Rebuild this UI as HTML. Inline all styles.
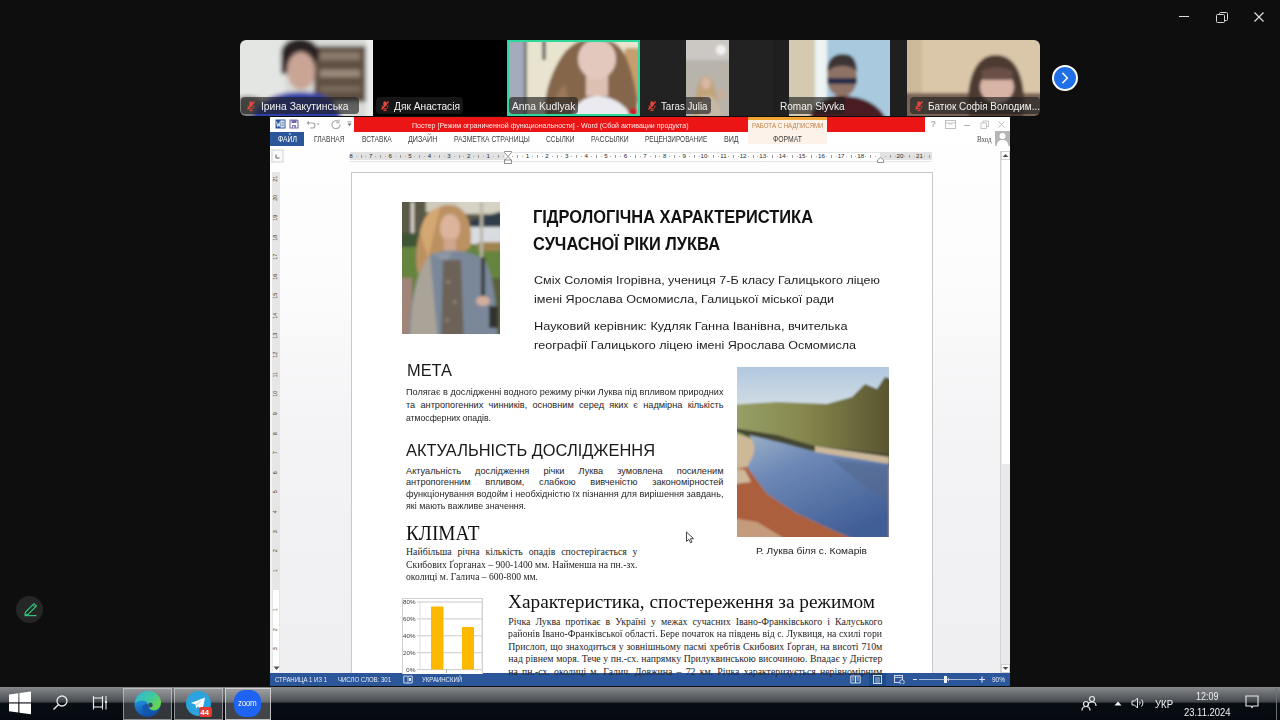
<!DOCTYPE html>
<html><head><meta charset="utf-8"><title>Zoom - Word poster</title>
<style>
html,body{margin:0;padding:0;}
body{width:1280px;height:720px;overflow:hidden;background:#0e0e0e;position:relative;font-family:"Liberation Sans",sans-serif;}
.a{position:absolute;}
.tl{position:absolute;white-space:nowrap;line-height:1;transform-origin:0 0;}
/* zoom controls */
.wc{position:absolute;}
/* video strip */
.strip{position:absolute;left:240px;top:40px;width:800px;height:76px;border-radius:6px;overflow:hidden;background:#000;}
.tile{position:absolute;top:0;height:76px;overflow:hidden;}
.lbl{position:absolute;top:57px;height:17px;border-radius:4px;background:rgba(34,34,34,0.66);}
.nxt{position:absolute;left:1052px;top:64.5px;width:22px;height:22px;border-radius:50%;background:#1f6fe8;border:2px solid #fff;}
/* word */
.word{position:absolute;left:270px;top:117px;width:740px;height:569px;background:#fff;overflow:hidden;}
.titlebar{position:absolute;left:84px;top:0;width:571px;height:15px;background:#ec1515;}
.ctx{position:absolute;left:478px;top:0;width:79px;height:27px;background:#fdf2e9;}
.ctx:before{content:"";position:absolute;left:0;top:0;width:79px;height:3px;background:#f3a531;}
.file{position:absolute;left:0;top:15px;width:34px;height:14px;background:#2b579a;}
.docbg{position:absolute;left:0;top:29px;width:730px;height:527px;background:linear-gradient(#fefefe 0px,#fcfcfd 130px,#f3f3f5 300px,#efeff1 527px);}
.page{position:absolute;left:81px;top:55px;width:580px;height:520px;background:#fff;border:1px solid #c8c8c8;border-bottom:none;}
.hrul{position:absolute;left:80px;top:35px;width:582px;height:8px;background:#fff;border-top:1px solid #e4e4e4;border-bottom:1px solid #e4e4e4;}
.hrulg{position:absolute;top:35px;height:8px;background:#e2e2e2;}
.vrul{position:absolute;left:2px;top:55px;width:8px;height:500px;background:#e6e6e6;}
.vrulw{position:absolute;left:2px;top:473px;width:8px;height:82px;background:#fff;border-left:1px solid #e6e6e6;border-right:1px solid #e6e6e6;box-sizing:border-box;}
.sb{position:absolute;left:730px;top:34px;width:10px;height:522px;background:#e9e9eb;border-left:1px solid #d4d4d4;box-sizing:border-box;}
.thumb{position:absolute;left:1px;top:9px;width:8px;height:304px;background:#fff;}
.status{position:absolute;left:0;top:556px;width:740px;height:13px;background:#2b579a;}
/* taskbar */
.task{position:absolute;left:0;top:687px;width:1280px;height:33px;background:linear-gradient(#86888a 0px,#6c6f72 6px,#494d52 14px,#2c3136 15.5px,#080d14 16px,#060a10 33px);}
.tbtn{position:absolute;top:688px;height:32px;box-sizing:border-box;border:1px solid rgba(220,220,220,0.55);background:rgba(255,255,255,0.18);}

</style></head><body>
<!-- zoom window controls -->
<div class="a" style="left:1179px;top:16px;width:10px;height:1.4px;background:#dcdcdc;"></div>
<div class="a" style="left:1218.5px;top:12px;width:7px;height:7px;border:1.2px solid #d8d8d8;border-radius:1.5px;"></div>
<div class="a" style="left:1216px;top:14px;width:7px;height:7px;border:1.2px solid #d8d8d8;border-radius:1.5px;background:#0e0e0e;"></div>
<svg class="a" style="left:1253px;top:11px" width="12" height="12" viewBox="0 0 12 12"><path d="M1.5 1.5L10.5 10.5M10.5 1.5L1.5 10.5" stroke="#dedede" stroke-width="1.2"/></svg>

<!-- video strip -->
<div class="strip">
<svg class="a" style="left:0px;top:0px;" width="134" height="76" viewBox="0 0 134 76"><defs><filter id="b0_0" x="-20%" y="-20%" width="140%" height="140%"><feGaussianBlur stdDeviation="2.0"/></filter></defs><g filter="url(#b0_0)"><rect x="-10" y="-10" width="160" height="100" fill="#d9dbd8"/><rect x="-10" y="-10" width="55" height="100" fill="#e4e6e3"/><ellipse cx="8" cy="70" rx="20" ry="14" fill="#7d7f7a"/><rect x="74" y="6" width="52" height="56" fill="#5f4f43"/><rect x="80" y="12" width="40" height="8" fill="#8a7a6c"/><rect x="80" y="30" width="40" height="7" fill="#9c8c7e"/><rect x="80" y="46" width="40" height="6" fill="#7a6a5c"/><rect x="126" y="-5" width="12" height="90" fill="#ececea"/><ellipse cx="60" cy="13" rx="19" ry="15" fill="#2a2323"/><rect x="41" y="12" width="8" height="22" fill="#2a2323"/><ellipse cx="61" cy="31" rx="14" ry="19" fill="#caa596"/><path d="M12 80C16 60 36 52 60 52C84 52 98 60 102 80Z" fill="#2a3ca8"/></g></svg>
<div class="lbl" style="left:1px;width:118px;"></div><svg class="a" style="left:5px;top:60px;" width="12" height="12" viewBox="0 0 12 12"><path d="M2.5 9.5L9.5 1.5" stroke="#e8453c" stroke-width="1.3"/><rect x="4.3" y="1.2" width="3.2" height="5.5" rx="1.6" fill="#e8453c"/><path d="M3 5.5C3 8 4.2 8.8 6 8.8C7.8 8.8 9 8 9 5.5M6 8.8V10.5M4.3 10.6H7.7" stroke="#e8453c" stroke-width="0.9" fill="none"/></svg>
<div class="tile" style="left:133.33px;width:133.34px;background:#000;"></div>
<div class="lbl" style="left:136px;width:87px;"></div><svg class="a" style="left:139px;top:60px;" width="12" height="12" viewBox="0 0 12 12"><path d="M2.5 9.5L9.5 1.5" stroke="#e8453c" stroke-width="1.3"/><rect x="4.3" y="1.2" width="3.2" height="5.5" rx="1.6" fill="#e8453c"/><path d="M3 5.5C3 8 4.2 8.8 6 8.8C7.8 8.8 9 8 9 5.5M6 8.8V10.5M4.3 10.6H7.7" stroke="#e8453c" stroke-width="0.9" fill="none"/></svg>
<svg class="a" style="left:266.67px;top:0px;" width="134" height="76" viewBox="0 0 134 76"><defs><filter id="b266_0" x="-20%" y="-20%" width="140%" height="140%"><feGaussianBlur stdDeviation="1.8"/></filter></defs><g filter="url(#b266_0)"><rect x="-10" y="-10" width="160" height="100" fill="#e9e4cf"/><rect x="-10" y="-10" width="28" height="100" fill="#a5aabc"/><rect x="17" y="-5" width="3" height="90" fill="#6e6e70"/><rect x="35" y="0" width="4" height="20" fill="#707070"/><rect x="118" y="8" width="20" height="55" fill="#c79f6e"/><path d="M40 80C34 60 44 30 58 12C66 3 76 -2 88 -2C104 -2 116 6 120 20C128 40 132 62 130 80Z" fill="#86664c"/><path d="M46 80C44 66 50 50 58 44L66 80Z" fill="#9a7858"/><rect x="79" y="34" width="22" height="22" fill="#dcc0b2"/><ellipse cx="90" cy="19" rx="19" ry="20" fill="#e3c9bd"/><path d="M64 80C66 64 78 56 90 56C104 56 120 64 126 80Z" fill="#ebeaf0"/><ellipse cx="126" cy="72" rx="5" ry="4" fill="#c0202a"/></g></svg>
<div class="tile" style="left:266.67px;width:133.33px;box-sizing:border-box;border:2px solid #2fd79a;background:transparent;"></div>
<div class="lbl" style="left:269px;width:69px;"></div>
<div class="tile" style="left:400px;width:133.33px;background:#222;"></div>
<svg class="a" style="left:445.5px;top:0px;" width="43" height="76" viewBox="0 0 43 76"><defs><filter id="b445_0" x="-20%" y="-20%" width="140%" height="140%"><feGaussianBlur stdDeviation="1.5"/></filter></defs><g filter="url(#b445_0)"><rect x="-10" y="-10" width="70" height="100" fill="#b8b3ab"/><rect x="-10" y="-10" width="70" height="30" fill="#cbc8c3"/><circle cx="35" cy="10" r="5" fill="#f2f2f2"/><path d="M8 80C8 56 12 36 20 36C28 36 32 56 34 80Z" fill="#c2a47a"/><ellipse cx="20" cy="43" rx="4.5" ry="6" fill="#d9b7a5"/><path d="M12 80C13 62 16 56 22 56C30 56 34 64 36 80Z" fill="#c5b8a4"/><ellipse cx="36" cy="54" rx="2.5" ry="5" fill="#d2aa98"/></g></svg>
<div class="lbl" style="left:403px;width:68px;"></div><svg class="a" style="left:406px;top:60px;" width="12" height="12" viewBox="0 0 12 12"><path d="M2.5 9.5L9.5 1.5" stroke="#e8453c" stroke-width="1.3"/><rect x="4.3" y="1.2" width="3.2" height="5.5" rx="1.6" fill="#e8453c"/><path d="M3 5.5C3 8 4.2 8.8 6 8.8C7.8 8.8 9 8 9 5.5M6 8.8V10.5M4.3 10.6H7.7" stroke="#e8453c" stroke-width="0.9" fill="none"/></svg>
<div class="tile" style="left:533.33px;width:133.34px;background:#1f1f1f;"></div>
<svg class="a" style="left:549px;top:0px;" width="101" height="76" viewBox="0 0 101 76"><defs><filter id="b549_0" x="-20%" y="-20%" width="140%" height="140%"><feGaussianBlur stdDeviation="1.5"/></filter></defs><g filter="url(#b549_0)"><rect x="-10" y="-10" width="130" height="100" fill="#a9cade"/><rect x="-10" y="-10" width="36" height="100" fill="#d3cab1"/><rect x="26" y="-10" width="12" height="100" fill="#eef3f3"/><ellipse cx="53" cy="38" rx="15" ry="19" fill="#8f7266"/><path d="M38 32C38 18 46 14 54 14C62 14 68 18 68 32C62 24 46 24 38 32Z" fill="#3c3636"/><rect x="38" y="38" width="30" height="6" rx="2" fill="#1e2a48"/><path d="M20 80C24 64 36 56 54 56C74 56 90 64 98 80Z" fill="#4a1c20"/></g></svg>
<div class="lbl" style="left:537.5px;width:67.5px;"></div>
<svg class="a" style="left:666.67px;top:0px;" width="134" height="76" viewBox="0 0 134 76"><defs><filter id="b666_0" x="-20%" y="-20%" width="140%" height="140%"><feGaussianBlur stdDeviation="1.8"/></filter></defs><g filter="url(#b666_0)"><rect x="-10" y="-10" width="160" height="100" fill="#dac6a8"/><rect x="-10" y="-10" width="25" height="100" fill="#cdb89a"/><rect x="-10" y="53" width="160" height="30" fill="#7c6454"/><path d="M62 80C58 50 64 15 89 15C114 15 120 50 116 80Z" fill="#4e3a32"/><ellipse cx="90" cy="47" rx="17" ry="16" fill="#d8b4a6"/><path d="M74 32C80 26 100 26 106 32L104 40L76 40Z" fill="#6a5046"/></g></svg>
<div class="lbl" style="left:670px;width:130px;"></div><svg class="a" style="left:673px;top:60px;" width="12" height="12" viewBox="0 0 12 12"><path d="M2.5 9.5L9.5 1.5" stroke="#e8453c" stroke-width="1.3"/><rect x="4.3" y="1.2" width="3.2" height="5.5" rx="1.6" fill="#e8453c"/><path d="M3 5.5C3 8 4.2 8.8 6 8.8C7.8 8.8 9 8 9 5.5M6 8.8V10.5M4.3 10.6H7.7" stroke="#e8453c" stroke-width="0.9" fill="none"/></svg>
</div>
<div class="nxt"><svg class="a" style="left:5px;top:4px" width="12" height="14" viewBox="0 0 12 14"><path d="M3.8 2.2L8.3 7L3.8 11.8" stroke="#fff" stroke-width="1.5" fill="none" stroke-linecap="round"/></svg></div>

<!-- annotate pencil -->
<div class="a" style="left:16px;top:596px;width:27px;height:27px;border-radius:50%;background:#262626;"></div>
<svg class="a" style="left:20px;top:599px" width="20" height="20" viewBox="0 0 20 20"><path d="M5 15.5L5.6 13L14 4.6L16.4 7L8 15.4Z" stroke="#2fc07c" stroke-width="1.2" fill="none" stroke-linejoin="round"/><path d="M12.6 6L15 8.4" stroke="#2fc07c" stroke-width="1"/><path d="M4.5 16.6H16.5" stroke="#2fc07c" stroke-width="1.2"/></svg>

<!-- word window -->
<div class="word">
  <div class="docbg"></div>
  <div class="titlebar"></div>
  <div class="ctx"></div>
  <div class="file"></div>
  <div class="hrul"></div>
  <div class="hrulg" style="left:80px;width:155px;"></div>
  <div class="hrulg" style="left:610px;width:52px;"></div>
  <div class="vrul"></div>
  <div class="vrulw"></div>
  <div class="page"></div>
  <div class="sb"><div class="thumb"></div></div>
  <div class="status"></div>
  <svg class="a" style="left:5px;top:2px;" width="11" height="10" viewBox="0 0 11 10"><rect x="0.5" y="0.5" width="10" height="9" fill="#2b579a"/><rect x="5.5" y="1.5" width="4" height="7" fill="#fff"/><rect x="6.3" y="2.8" width="2.5" height="0.8" fill="#2b579a"/><rect x="6.3" y="4.6" width="2.5" height="0.8" fill="#2b579a"/><rect x="6.3" y="6.4" width="2.5" height="0.8" fill="#2b579a"/><path d="M1.5 2.5L2.5 7.5L3.3 4.5L4.1 7.5L5 2.5" stroke="#fff" stroke-width="0.8" fill="none"/></svg>
<svg class="a" style="left:19px;top:2px;" width="10" height="10" viewBox="0 0 10 10"><path d="M1 1H8L9 2V9H1Z" fill="#fff" stroke="#7466a8" stroke-width="1.1"/><rect x="2.5" y="1" width="5" height="3" fill="#7466a8"/><rect x="3" y="6" width="4" height="3" fill="#8a80b8"/><rect x="4" y="7" width="1.2" height="1.5" fill="#fff"/></svg>
<svg class="a" style="left:36px;top:2px;" width="10" height="10" viewBox="0 0 10 10"><path d="M2 4H6.5C8.5 4 9 5.5 9 6.5C9 8 8 9 6.5 9H4" stroke="#a8a8a8" stroke-width="1.2" fill="none"/><path d="M0.5 4L3 1.5V6.5Z" fill="#a8a8a8"/></svg>
<svg class="a" style="left:46px;top:5px;" width="4" height="4" viewBox="0 0 4 4"><path d="M0.5 1.5H3.5L2 3Z" fill="#999"/></svg>
<svg class="a" style="left:61px;top:2px;" width="10" height="10" viewBox="0 0 10 10"><path d="M7.5 2.5A4 4 0 1 0 9 5.5" stroke="#aaa" stroke-width="1.2" fill="none"/><path d="M8 0.5V3.8H4.8" stroke="#aaa" stroke-width="1" fill="none"/></svg>
<svg class="a" style="left:77px;top:4px;" width="5" height="6" viewBox="0 0 5 6"><rect x="0.5" y="0.5" width="4" height="0.8" fill="#888"/><path d="M0.5 2.5H4.5L2.5 5Z" fill="#666"/></svg>
<div class="tl" style="left:660.5px;top:3px;font-family:'Liberation Sans',sans-serif;font-size:9px;font-weight:700;color:#b4b4b4;">?</div>
<svg class="a" style="left:675px;top:3px;" width="11" height="9" viewBox="0 0 11 9"><rect x="0.5" y="0.5" width="10" height="8" fill="none" stroke="#b8b8b8" stroke-width="0.9"/><path d="M0.5 3H10.5" stroke="#b8b8b8" stroke-width="0.9"/><path d="M3.5 5L5.5 3.5L7.5 5" stroke="#b8b8b8" stroke-width="0.8" fill="none"/></svg>
<div class="a" style="left:694px;top:8px;width:6px;height:1px;background:#b0b0b0;"></div>
<svg class="a" style="left:710px;top:3px;" width="9" height="9" viewBox="0 0 9 9"><rect x="1" y="3" width="5.5" height="5.5" fill="none" stroke="#b8b8b8" stroke-width="0.8"/><path d="M3 3V1H8.5V6.5H6.5" fill="none" stroke="#b8b8b8" stroke-width="0.8"/></svg>
<svg class="a" style="left:727px;top:3px;" width="9" height="9" viewBox="0 0 9 9"><path d="M1.5 1.5L7.5 7.5M7.5 1.5L1.5 7.5" stroke="#b4b4b4" stroke-width="0.9"/></svg>
<svg class="a" style="left:725px;top:14px;" width="15" height="15" viewBox="0 0 15 15"><rect x="0" y="0" width="15" height="15" fill="#b5b5b5"/><circle cx="7.5" cy="5" r="3" fill="#fff"/><path d="M1.5 15C2 10.5 4.5 9 7.5 9C10.5 9 13 10.5 13.5 15Z" fill="#fff"/></svg>
<div class="a" style="left:1px;top:32px;width:13px;height:14px;background:#e6e6e6;"></div>
<div class="a" style="left:3px;top:34px;width:9px;height:10px;background:#fafafa;"></div>
<svg class="a" style="left:5px;top:37px;" width="5" height="5" viewBox="0 0 5 5"><path d="M1 0.5V4H4.5" stroke="#666" stroke-width="1" fill="none"/></svg>
<svg class="a" style="left:234px;top:34px;" width="8" height="13" viewBox="0 0 8 13"><path d="M0.5 0.5H7.5V1.5L4 5.5L0.5 1.5Z" fill="#fff" stroke="#777" stroke-width="0.8"/><path d="M0.5 9.5L4 5.5L7.5 9.5Z" fill="#fff" stroke="#777" stroke-width="0.8"/><rect x="0.5" y="9" width="7" height="3.5" fill="#fff" stroke="#777" stroke-width="0.8"/></svg>
<svg class="a" style="left:607px;top:40px;" width="7" height="6" viewBox="0 0 7 6"><path d="M0.5 5.5H6.5V3L3.5 0.5L0.5 3Z" fill="#fff" stroke="#777" stroke-width="0.8"/></svg>
<div class="tl" style="left:81.1px;top:36px;width:10px;margin-left:-5px;text-align:center;font-family:'Liberation Sans',sans-serif;font-size:6.2px;color:#2a2a2a;">8</div>
<div class="a" style="left:85.6px;top:38.5px;width:0.8px;height:1px;background:#b0b0b0;"></div>
<div class="a" style="left:90.5px;top:37.5px;width:0.8px;height:3px;background:#9a9a9a;"></div>
<div class="a" style="left:95.4px;top:38.5px;width:0.8px;height:1px;background:#b0b0b0;"></div>
<div class="tl" style="left:100.7px;top:36px;width:10px;margin-left:-5px;text-align:center;font-family:'Liberation Sans',sans-serif;font-size:6.2px;color:#2a2a2a;">7</div>
<div class="a" style="left:105.2px;top:38.5px;width:0.8px;height:1px;background:#b0b0b0;"></div>
<div class="a" style="left:110.1px;top:37.5px;width:0.8px;height:3px;background:#9a9a9a;"></div>
<div class="a" style="left:115.0px;top:38.5px;width:0.8px;height:1px;background:#b0b0b0;"></div>
<div class="tl" style="left:120.3px;top:36px;width:10px;margin-left:-5px;text-align:center;font-family:'Liberation Sans',sans-serif;font-size:6.2px;color:#2a2a2a;">6</div>
<div class="a" style="left:124.8px;top:38.5px;width:0.8px;height:1px;background:#b0b0b0;"></div>
<div class="a" style="left:129.7px;top:37.5px;width:0.8px;height:3px;background:#9a9a9a;"></div>
<div class="a" style="left:134.6px;top:38.5px;width:0.8px;height:1px;background:#b0b0b0;"></div>
<div class="tl" style="left:139.9px;top:36px;width:10px;margin-left:-5px;text-align:center;font-family:'Liberation Sans',sans-serif;font-size:6.2px;color:#2a2a2a;">5</div>
<div class="a" style="left:144.4px;top:38.5px;width:0.8px;height:1px;background:#b0b0b0;"></div>
<div class="a" style="left:149.3px;top:37.5px;width:0.8px;height:3px;background:#9a9a9a;"></div>
<div class="a" style="left:154.2px;top:38.5px;width:0.8px;height:1px;background:#b0b0b0;"></div>
<div class="tl" style="left:159.5px;top:36px;width:10px;margin-left:-5px;text-align:center;font-family:'Liberation Sans',sans-serif;font-size:6.2px;color:#2a2a2a;">4</div>
<div class="a" style="left:164.0px;top:38.5px;width:0.8px;height:1px;background:#b0b0b0;"></div>
<div class="a" style="left:168.9px;top:37.5px;width:0.8px;height:3px;background:#9a9a9a;"></div>
<div class="a" style="left:173.8px;top:38.5px;width:0.8px;height:1px;background:#b0b0b0;"></div>
<div class="tl" style="left:179.1px;top:36px;width:10px;margin-left:-5px;text-align:center;font-family:'Liberation Sans',sans-serif;font-size:6.2px;color:#2a2a2a;">3</div>
<div class="a" style="left:183.6px;top:38.5px;width:0.8px;height:1px;background:#b0b0b0;"></div>
<div class="a" style="left:188.5px;top:37.5px;width:0.8px;height:3px;background:#9a9a9a;"></div>
<div class="a" style="left:193.4px;top:38.5px;width:0.8px;height:1px;background:#b0b0b0;"></div>
<div class="tl" style="left:198.7px;top:36px;width:10px;margin-left:-5px;text-align:center;font-family:'Liberation Sans',sans-serif;font-size:6.2px;color:#2a2a2a;">2</div>
<div class="a" style="left:203.2px;top:38.5px;width:0.8px;height:1px;background:#b0b0b0;"></div>
<div class="a" style="left:208.1px;top:37.5px;width:0.8px;height:3px;background:#9a9a9a;"></div>
<div class="a" style="left:213.0px;top:38.5px;width:0.8px;height:1px;background:#b0b0b0;"></div>
<div class="tl" style="left:218.3px;top:36px;width:10px;margin-left:-5px;text-align:center;font-family:'Liberation Sans',sans-serif;font-size:6.2px;color:#2a2a2a;">1</div>
<div class="a" style="left:222.8px;top:38.5px;width:0.8px;height:1px;background:#b0b0b0;"></div>
<div class="a" style="left:227.7px;top:37.5px;width:0.8px;height:3px;background:#9a9a9a;"></div>
<div class="a" style="left:232.6px;top:38.5px;width:0.8px;height:1px;background:#b0b0b0;"></div>
<div class="a" style="left:242.4px;top:38.5px;width:0.8px;height:1px;background:#b0b0b0;"></div>
<div class="a" style="left:247.3px;top:37.5px;width:0.8px;height:3px;background:#9a9a9a;"></div>
<div class="a" style="left:252.2px;top:38.5px;width:0.8px;height:1px;background:#b0b0b0;"></div>
<div class="tl" style="left:257.5px;top:36px;width:10px;margin-left:-5px;text-align:center;font-family:'Liberation Sans',sans-serif;font-size:6.2px;color:#2a2a2a;">1</div>
<div class="a" style="left:262.0px;top:38.5px;width:0.8px;height:1px;background:#b0b0b0;"></div>
<div class="a" style="left:266.9px;top:37.5px;width:0.8px;height:3px;background:#9a9a9a;"></div>
<div class="a" style="left:271.8px;top:38.5px;width:0.8px;height:1px;background:#b0b0b0;"></div>
<div class="tl" style="left:277.1px;top:36px;width:10px;margin-left:-5px;text-align:center;font-family:'Liberation Sans',sans-serif;font-size:6.2px;color:#2a2a2a;">2</div>
<div class="a" style="left:281.6px;top:38.5px;width:0.8px;height:1px;background:#b0b0b0;"></div>
<div class="a" style="left:286.5px;top:37.5px;width:0.8px;height:3px;background:#9a9a9a;"></div>
<div class="a" style="left:291.4px;top:38.5px;width:0.8px;height:1px;background:#b0b0b0;"></div>
<div class="tl" style="left:296.7px;top:36px;width:10px;margin-left:-5px;text-align:center;font-family:'Liberation Sans',sans-serif;font-size:6.2px;color:#2a2a2a;">3</div>
<div class="a" style="left:301.2px;top:38.5px;width:0.8px;height:1px;background:#b0b0b0;"></div>
<div class="a" style="left:306.1px;top:37.5px;width:0.8px;height:3px;background:#9a9a9a;"></div>
<div class="a" style="left:311.0px;top:38.5px;width:0.8px;height:1px;background:#b0b0b0;"></div>
<div class="tl" style="left:316.3px;top:36px;width:10px;margin-left:-5px;text-align:center;font-family:'Liberation Sans',sans-serif;font-size:6.2px;color:#2a2a2a;">4</div>
<div class="a" style="left:320.8px;top:38.5px;width:0.8px;height:1px;background:#b0b0b0;"></div>
<div class="a" style="left:325.7px;top:37.5px;width:0.8px;height:3px;background:#9a9a9a;"></div>
<div class="a" style="left:330.6px;top:38.5px;width:0.8px;height:1px;background:#b0b0b0;"></div>
<div class="tl" style="left:335.9px;top:36px;width:10px;margin-left:-5px;text-align:center;font-family:'Liberation Sans',sans-serif;font-size:6.2px;color:#2a2a2a;">5</div>
<div class="a" style="left:340.4px;top:38.5px;width:0.8px;height:1px;background:#b0b0b0;"></div>
<div class="a" style="left:345.3px;top:37.5px;width:0.8px;height:3px;background:#9a9a9a;"></div>
<div class="a" style="left:350.2px;top:38.5px;width:0.8px;height:1px;background:#b0b0b0;"></div>
<div class="tl" style="left:355.5px;top:36px;width:10px;margin-left:-5px;text-align:center;font-family:'Liberation Sans',sans-serif;font-size:6.2px;color:#2a2a2a;">6</div>
<div class="a" style="left:360.0px;top:38.5px;width:0.8px;height:1px;background:#b0b0b0;"></div>
<div class="a" style="left:364.9px;top:37.5px;width:0.8px;height:3px;background:#9a9a9a;"></div>
<div class="a" style="left:369.8px;top:38.5px;width:0.8px;height:1px;background:#b0b0b0;"></div>
<div class="tl" style="left:375.1px;top:36px;width:10px;margin-left:-5px;text-align:center;font-family:'Liberation Sans',sans-serif;font-size:6.2px;color:#2a2a2a;">7</div>
<div class="a" style="left:379.6px;top:38.5px;width:0.8px;height:1px;background:#b0b0b0;"></div>
<div class="a" style="left:384.5px;top:37.5px;width:0.8px;height:3px;background:#9a9a9a;"></div>
<div class="a" style="left:389.4px;top:38.5px;width:0.8px;height:1px;background:#b0b0b0;"></div>
<div class="tl" style="left:394.7px;top:36px;width:10px;margin-left:-5px;text-align:center;font-family:'Liberation Sans',sans-serif;font-size:6.2px;color:#2a2a2a;">8</div>
<div class="a" style="left:399.2px;top:38.5px;width:0.8px;height:1px;background:#b0b0b0;"></div>
<div class="a" style="left:404.1px;top:37.5px;width:0.8px;height:3px;background:#9a9a9a;"></div>
<div class="a" style="left:409.0px;top:38.5px;width:0.8px;height:1px;background:#b0b0b0;"></div>
<div class="tl" style="left:414.3px;top:36px;width:10px;margin-left:-5px;text-align:center;font-family:'Liberation Sans',sans-serif;font-size:6.2px;color:#2a2a2a;">9</div>
<div class="a" style="left:418.8px;top:38.5px;width:0.8px;height:1px;background:#b0b0b0;"></div>
<div class="a" style="left:423.7px;top:37.5px;width:0.8px;height:3px;background:#9a9a9a;"></div>
<div class="a" style="left:428.6px;top:38.5px;width:0.8px;height:1px;background:#b0b0b0;"></div>
<div class="tl" style="left:433.9px;top:36px;width:10px;margin-left:-5px;text-align:center;font-family:'Liberation Sans',sans-serif;font-size:6.2px;color:#2a2a2a;">10</div>
<div class="a" style="left:438.4px;top:38.5px;width:0.8px;height:1px;background:#b0b0b0;"></div>
<div class="a" style="left:443.3px;top:37.5px;width:0.8px;height:3px;background:#9a9a9a;"></div>
<div class="a" style="left:448.2px;top:38.5px;width:0.8px;height:1px;background:#b0b0b0;"></div>
<div class="tl" style="left:453.5px;top:36px;width:10px;margin-left:-5px;text-align:center;font-family:'Liberation Sans',sans-serif;font-size:6.2px;color:#2a2a2a;">11</div>
<div class="a" style="left:458.0px;top:38.5px;width:0.8px;height:1px;background:#b0b0b0;"></div>
<div class="a" style="left:462.9px;top:37.5px;width:0.8px;height:3px;background:#9a9a9a;"></div>
<div class="a" style="left:467.8px;top:38.5px;width:0.8px;height:1px;background:#b0b0b0;"></div>
<div class="tl" style="left:473.1px;top:36px;width:10px;margin-left:-5px;text-align:center;font-family:'Liberation Sans',sans-serif;font-size:6.2px;color:#2a2a2a;">12</div>
<div class="a" style="left:477.6px;top:38.5px;width:0.8px;height:1px;background:#b0b0b0;"></div>
<div class="a" style="left:482.5px;top:37.5px;width:0.8px;height:3px;background:#9a9a9a;"></div>
<div class="a" style="left:487.4px;top:38.5px;width:0.8px;height:1px;background:#b0b0b0;"></div>
<div class="tl" style="left:492.7px;top:36px;width:10px;margin-left:-5px;text-align:center;font-family:'Liberation Sans',sans-serif;font-size:6.2px;color:#2a2a2a;">13</div>
<div class="a" style="left:497.2px;top:38.5px;width:0.8px;height:1px;background:#b0b0b0;"></div>
<div class="a" style="left:502.1px;top:37.5px;width:0.8px;height:3px;background:#9a9a9a;"></div>
<div class="a" style="left:507.0px;top:38.5px;width:0.8px;height:1px;background:#b0b0b0;"></div>
<div class="tl" style="left:512.3px;top:36px;width:10px;margin-left:-5px;text-align:center;font-family:'Liberation Sans',sans-serif;font-size:6.2px;color:#2a2a2a;">14</div>
<div class="a" style="left:516.8px;top:38.5px;width:0.8px;height:1px;background:#b0b0b0;"></div>
<div class="a" style="left:521.7px;top:37.5px;width:0.8px;height:3px;background:#9a9a9a;"></div>
<div class="a" style="left:526.6px;top:38.5px;width:0.8px;height:1px;background:#b0b0b0;"></div>
<div class="tl" style="left:531.9px;top:36px;width:10px;margin-left:-5px;text-align:center;font-family:'Liberation Sans',sans-serif;font-size:6.2px;color:#2a2a2a;">15</div>
<div class="a" style="left:536.4px;top:38.5px;width:0.8px;height:1px;background:#b0b0b0;"></div>
<div class="a" style="left:541.3px;top:37.5px;width:0.8px;height:3px;background:#9a9a9a;"></div>
<div class="a" style="left:546.2px;top:38.5px;width:0.8px;height:1px;background:#b0b0b0;"></div>
<div class="tl" style="left:551.5px;top:36px;width:10px;margin-left:-5px;text-align:center;font-family:'Liberation Sans',sans-serif;font-size:6.2px;color:#2a2a2a;">16</div>
<div class="a" style="left:556.0px;top:38.5px;width:0.8px;height:1px;background:#b0b0b0;"></div>
<div class="a" style="left:560.9px;top:37.5px;width:0.8px;height:3px;background:#9a9a9a;"></div>
<div class="a" style="left:565.8px;top:38.5px;width:0.8px;height:1px;background:#b0b0b0;"></div>
<div class="tl" style="left:571.1px;top:36px;width:10px;margin-left:-5px;text-align:center;font-family:'Liberation Sans',sans-serif;font-size:6.2px;color:#2a2a2a;">17</div>
<div class="a" style="left:575.6px;top:38.5px;width:0.8px;height:1px;background:#b0b0b0;"></div>
<div class="a" style="left:580.5px;top:37.5px;width:0.8px;height:3px;background:#9a9a9a;"></div>
<div class="a" style="left:585.4px;top:38.5px;width:0.8px;height:1px;background:#b0b0b0;"></div>
<div class="tl" style="left:590.7px;top:36px;width:10px;margin-left:-5px;text-align:center;font-family:'Liberation Sans',sans-serif;font-size:6.2px;color:#2a2a2a;">18</div>
<div class="a" style="left:595.2px;top:38.5px;width:0.8px;height:1px;background:#b0b0b0;"></div>
<div class="a" style="left:600.1px;top:37.5px;width:0.8px;height:3px;background:#9a9a9a;"></div>
<div class="a" style="left:605.0px;top:38.5px;width:0.8px;height:1px;background:#b0b0b0;"></div>
<div class="a" style="left:614.8px;top:38.5px;width:0.8px;height:1px;background:#b0b0b0;"></div>
<div class="a" style="left:619.7px;top:37.5px;width:0.8px;height:3px;background:#9a9a9a;"></div>
<div class="a" style="left:624.6px;top:38.5px;width:0.8px;height:1px;background:#b0b0b0;"></div>
<div class="tl" style="left:629.9px;top:36px;width:10px;margin-left:-5px;text-align:center;font-family:'Liberation Sans',sans-serif;font-size:6.2px;color:#2a2a2a;">20</div>
<div class="a" style="left:634.4px;top:38.5px;width:0.8px;height:1px;background:#b0b0b0;"></div>
<div class="a" style="left:639.3px;top:37.5px;width:0.8px;height:3px;background:#9a9a9a;"></div>
<div class="a" style="left:644.2px;top:38.5px;width:0.8px;height:1px;background:#b0b0b0;"></div>
<div class="tl" style="left:649.5px;top:36px;width:10px;margin-left:-5px;text-align:center;font-family:'Liberation Sans',sans-serif;font-size:6.2px;color:#2a2a2a;">21</div>
<div class="a" style="left:654.0px;top:38.5px;width:0.8px;height:1px;background:#b0b0b0;"></div>
<div class="a" style="left:658.9px;top:37.5px;width:0.8px;height:3px;background:#9a9a9a;"></div>
<div class="tl" style="left:6px;top:453.7px;width:10px;margin-left:-5px;margin-top:-3px;text-align:center;font-family:'Liberation Sans',sans-serif;font-size:5.5px;color:#3a3a3a;transform:rotate(-90deg);transform-origin:50% 50%;">1</div>
<div class="tl" style="left:6px;top:434.1px;width:10px;margin-left:-5px;margin-top:-3px;text-align:center;font-family:'Liberation Sans',sans-serif;font-size:5.5px;color:#3a3a3a;transform:rotate(-90deg);transform-origin:50% 50%;">2</div>
<div class="tl" style="left:6px;top:414.5px;width:10px;margin-left:-5px;margin-top:-3px;text-align:center;font-family:'Liberation Sans',sans-serif;font-size:5.5px;color:#3a3a3a;transform:rotate(-90deg);transform-origin:50% 50%;">3</div>
<div class="tl" style="left:6px;top:394.9px;width:10px;margin-left:-5px;margin-top:-3px;text-align:center;font-family:'Liberation Sans',sans-serif;font-size:5.5px;color:#3a3a3a;transform:rotate(-90deg);transform-origin:50% 50%;">4</div>
<div class="tl" style="left:6px;top:375.3px;width:10px;margin-left:-5px;margin-top:-3px;text-align:center;font-family:'Liberation Sans',sans-serif;font-size:5.5px;color:#3a3a3a;transform:rotate(-90deg);transform-origin:50% 50%;">5</div>
<div class="tl" style="left:6px;top:355.7px;width:10px;margin-left:-5px;margin-top:-3px;text-align:center;font-family:'Liberation Sans',sans-serif;font-size:5.5px;color:#3a3a3a;transform:rotate(-90deg);transform-origin:50% 50%;">6</div>
<div class="tl" style="left:6px;top:336.1px;width:10px;margin-left:-5px;margin-top:-3px;text-align:center;font-family:'Liberation Sans',sans-serif;font-size:5.5px;color:#3a3a3a;transform:rotate(-90deg);transform-origin:50% 50%;">7</div>
<div class="tl" style="left:6px;top:316.5px;width:10px;margin-left:-5px;margin-top:-3px;text-align:center;font-family:'Liberation Sans',sans-serif;font-size:5.5px;color:#3a3a3a;transform:rotate(-90deg);transform-origin:50% 50%;">8</div>
<div class="tl" style="left:6px;top:296.9px;width:10px;margin-left:-5px;margin-top:-3px;text-align:center;font-family:'Liberation Sans',sans-serif;font-size:5.5px;color:#3a3a3a;transform:rotate(-90deg);transform-origin:50% 50%;">9</div>
<div class="tl" style="left:6px;top:277.3px;width:10px;margin-left:-5px;margin-top:-3px;text-align:center;font-family:'Liberation Sans',sans-serif;font-size:5.5px;color:#3a3a3a;transform:rotate(-90deg);transform-origin:50% 50%;">10</div>
<div class="tl" style="left:6px;top:257.7px;width:10px;margin-left:-5px;margin-top:-3px;text-align:center;font-family:'Liberation Sans',sans-serif;font-size:5.5px;color:#3a3a3a;transform:rotate(-90deg);transform-origin:50% 50%;">11</div>
<div class="tl" style="left:6px;top:238.1px;width:10px;margin-left:-5px;margin-top:-3px;text-align:center;font-family:'Liberation Sans',sans-serif;font-size:5.5px;color:#3a3a3a;transform:rotate(-90deg);transform-origin:50% 50%;">12</div>
<div class="tl" style="left:6px;top:218.5px;width:10px;margin-left:-5px;margin-top:-3px;text-align:center;font-family:'Liberation Sans',sans-serif;font-size:5.5px;color:#3a3a3a;transform:rotate(-90deg);transform-origin:50% 50%;">13</div>
<div class="tl" style="left:6px;top:198.9px;width:10px;margin-left:-5px;margin-top:-3px;text-align:center;font-family:'Liberation Sans',sans-serif;font-size:5.5px;color:#3a3a3a;transform:rotate(-90deg);transform-origin:50% 50%;">14</div>
<div class="tl" style="left:6px;top:179.3px;width:10px;margin-left:-5px;margin-top:-3px;text-align:center;font-family:'Liberation Sans',sans-serif;font-size:5.5px;color:#3a3a3a;transform:rotate(-90deg);transform-origin:50% 50%;">15</div>
<div class="tl" style="left:6px;top:159.7px;width:10px;margin-left:-5px;margin-top:-3px;text-align:center;font-family:'Liberation Sans',sans-serif;font-size:5.5px;color:#3a3a3a;transform:rotate(-90deg);transform-origin:50% 50%;">16</div>
<div class="tl" style="left:6px;top:140.1px;width:10px;margin-left:-5px;margin-top:-3px;text-align:center;font-family:'Liberation Sans',sans-serif;font-size:5.5px;color:#3a3a3a;transform:rotate(-90deg);transform-origin:50% 50%;">17</div>
<div class="tl" style="left:6px;top:120.5px;width:10px;margin-left:-5px;margin-top:-3px;text-align:center;font-family:'Liberation Sans',sans-serif;font-size:5.5px;color:#3a3a3a;transform:rotate(-90deg);transform-origin:50% 50%;">18</div>
<div class="tl" style="left:6px;top:100.9px;width:10px;margin-left:-5px;margin-top:-3px;text-align:center;font-family:'Liberation Sans',sans-serif;font-size:5.5px;color:#3a3a3a;transform:rotate(-90deg);transform-origin:50% 50%;">19</div>
<div class="tl" style="left:6px;top:81.3px;width:10px;margin-left:-5px;margin-top:-3px;text-align:center;font-family:'Liberation Sans',sans-serif;font-size:5.5px;color:#3a3a3a;transform:rotate(-90deg);transform-origin:50% 50%;">20</div>
<div class="tl" style="left:6px;top:61.7px;width:10px;margin-left:-5px;margin-top:-3px;text-align:center;font-family:'Liberation Sans',sans-serif;font-size:5.5px;color:#3a3a3a;transform:rotate(-90deg);transform-origin:50% 50%;">21</div>
<div class="tl" style="left:6px;top:492.9px;width:10px;margin-left:-5px;margin-top:-3px;text-align:center;font-family:'Liberation Sans',sans-serif;font-size:5.5px;color:#3a3a3a;transform:rotate(-90deg);transform-origin:50% 50%;">1</div>
<div class="tl" style="left:6px;top:512.5px;width:10px;margin-left:-5px;margin-top:-3px;text-align:center;font-family:'Liberation Sans',sans-serif;font-size:5.5px;color:#3a3a3a;transform:rotate(-90deg);transform-origin:50% 50%;">2</div>
<div class="tl" style="left:6px;top:532.1px;width:10px;margin-left:-5px;margin-top:-3px;text-align:center;font-family:'Liberation Sans',sans-serif;font-size:5.5px;color:#3a3a3a;transform:rotate(-90deg);transform-origin:50% 50%;">3</div>
<svg class="a" style="left:3px;top:549px;" width="7" height="5" viewBox="0 0 7 5"><path d="M0.5 0.5H6.5L3.5 4Z" fill="#555"/></svg>
<div class="a" style="left:731px;top:34px;width:9px;height:9px;background:#fff;border:1px solid #d0d0d0;box-sizing:border-box;"></div>
<svg class="a" style="left:732px;top:36px;" width="7" height="5" viewBox="0 0 7 5"><path d="M0.5 4H6.5L3.5 1Z" fill="#555"/></svg>
<div class="a" style="left:731px;top:547px;width:9px;height:9px;background:#fff;border:1px solid #d0d0d0;box-sizing:border-box;"></div>
<svg class="a" style="left:732px;top:549px;" width="7" height="5" viewBox="0 0 7 5"><path d="M0.5 1H6.5L3.5 4Z" fill="#555"/></svg>
<svg class="a" style="left:133px;top:558px;" width="10" height="9" viewBox="0 0 10 9"><path d="M0.8 1V8H4.5L5 8.6L5.5 8H9.2V1H5.5L5 1.6L4.5 1Z" fill="none" stroke="#dfe6f2" stroke-width="0.9"/><path d="M5 1.5V8" stroke="#dfe6f2" stroke-width="0.8"/><rect x="6" y="3" width="2" height="3" fill="#dfe6f2"/></svg>
<svg class="a" style="left:580px;top:558px;" width="11" height="9" viewBox="0 0 11 9"><path d="M0.8 1V8H5.5V1ZM5.5 1V8H10.2V1Z" fill="none" stroke="#dfe6f2" stroke-width="0.9"/><path d="M2 3H4.3M2 5H4.3M6.7 3H9M6.7 5H9" stroke="#dfe6f2" stroke-width="0.7"/></svg>
<div class="a" style="left:599px;top:556px;width:17px;height:13px;background:#1e4a86;"></div>
<svg class="a" style="left:603px;top:558px;" width="9" height="9" viewBox="0 0 9 9"><rect x="0.5" y="0.5" width="8" height="8" fill="none" stroke="#dfe6f2" stroke-width="0.9"/><path d="M2 3H7M2 5H7M2 7H7" stroke="#dfe6f2" stroke-width="0.8"/></svg>
<svg class="a" style="left:624px;top:558px;" width="11" height="9" viewBox="0 0 11 9"><rect x="0.5" y="0.5" width="8" height="7" fill="none" stroke="#dfe6f2" stroke-width="0.9"/><path d="M0.5 2.5H8.5" stroke="#dfe6f2" stroke-width="0.8"/><circle cx="8" cy="7" r="2.3" fill="#2b579a" stroke="#dfe6f2" stroke-width="0.8"/></svg>
<div class="a" style="left:643px;top:562px;width:4px;height:1px;background:#dfe6f2;"></div>
<div class="a" style="left:649px;top:562px;width:58px;height:1px;background:#a9bbd8;"></div>
<div class="a" style="left:674px;top:559px;width:3px;height:7px;background:#f2f5fa;"></div>
<div class="a" style="left:678px;top:561px;width:1px;height:3px;background:#c9d5e8;"></div>
<svg class="a" style="left:709px;top:559px;" width="6" height="7" viewBox="0 0 6 7"><path d="M3 0.5V6.5M0 3.5H6" stroke="#dfe6f2" stroke-width="1.1"/></svg>
</div>
<svg class="a" style="left:402px;top:202px;" width="98" height="132" viewBox="0 0 98 132"><defs><filter id="b402_202" x="-20%" y="-20%" width="140%" height="140%"><feGaussianBlur stdDeviation="1.5"/></filter></defs><g filter="url(#b402_202)"><rect x="-10" y="-10" width="120" height="160" fill="#667e44"/><rect x="-10" y="-10" width="120" height="42" fill="#5a5846"/><rect x="24" y="-10" width="40" height="20" fill="#cfcabb"/><rect x="56" y="-10" width="52" height="22" fill="#d6d2c4"/><rect x="9" y="0" width="3" height="36" fill="#dad6cc"/><path d="M64 20L100 9V26H64Z" fill="#2f3c48"/><rect x="68" y="25" width="32" height="17" fill="#d9dde0"/><rect x="-10" y="31" width="40" height="14" fill="#3d5530"/><rect x="-10" y="45" width="120" height="35" fill="#65843e"/><rect x="76" y="40" width="25" height="9" fill="#a08450"/><rect x="78" y="0" width="3" height="100" fill="#b8b4a6"/><rect x="-10" y="76" width="20" height="60" fill="#a08478"/><rect x="86" y="76" width="20" height="60" fill="#58603a"/><path d="M16 72C10 45 20 3 47 3C66 3 72 26 68 46L58 52L30 60Z" fill="#bc9162"/><path d="M18 30C22 12 30 6 38 6L26 56Z" fill="#d4a872"/><ellipse cx="48" cy="26" rx="10" ry="14" fill="#dbb49c"/><rect x="42" y="36" width="12" height="14" fill="#cfa68e"/><path d="M6 140C8 104 14 64 30 52C45 46 70 47 84 60C92 76 96 110 95 140Z" fill="#7a889a"/><path d="M8 140C9 104 14 66 28 54L36 140Z" fill="#aaa498"/><path d="M30 52L50 50L44 60Z" fill="#8d98a6"/><path d="M39 140L41 58L59 58L62 140Z" fill="#6c6258"/><circle cx="46" cy="80" r="2" fill="#8c8276"/><circle cx="53" cy="100" r="2" fill="#8c8276"/><circle cx="45" cy="118" r="2" fill="#8c8276"/><rect x="79" y="55" width="4" height="45" fill="#3a3c40"/><ellipse cx="81" cy="99" rx="7" ry="5" fill="#d2ae9c"/><rect x="87" y="104" width="9" height="22" fill="#33332f"/></g></svg>
<svg class="a" style="left:737px;top:367px;" width="152" height="170" viewBox="0 0 152 170"><defs><filter id="b737_367" x="-20%" y="-20%" width="140%" height="140%"><feGaussianBlur stdDeviation="1.2"/></filter></defs><g filter="url(#b737_367)"><defs><linearGradient id="sky" x1="0" y1="0" x2="0" y2="1"><stop offset="0" stop-color="#a9c3df"/><stop offset="1" stop-color="#d4dee4"/></linearGradient><linearGradient id="riv" x1="0" y1="0" x2="0.6" y2="1"><stop offset="0" stop-color="#9cb0c8"/><stop offset="0.35" stop-color="#6d88b6"/><stop offset="1" stop-color="#415e96"/></linearGradient><linearGradient id="veg" x1="0" y1="0" x2="1" y2="0"><stop offset="0" stop-color="#98a26a"/><stop offset="0.45" stop-color="#86884e"/><stop offset="1" stop-color="#55502e"/></linearGradient></defs><rect x="-10" y="-10" width="180" height="200" fill="#c6ae8e"/><rect x="-10" y="-10" width="180" height="52" fill="url(#sky)"/><path d="M-10 38L40 35L90 37L115 30L128 17L140 22L148 10L160 14V100H-10Z" fill="url(#veg)"/><path d="M-10 60L40 68L78 79L160 88V96L78 84L25 76Z" fill="#444632"/><path d="M78 79L152 90V98L78 85.5Z" fill="#cbb89c"/><path d="M-10 64L25 75L22 90L8 103L-10 103Z" fill="#cdb898"/><path d="M12 68C30 72 55 78 78 85L152 97V175H124L95 163L59 146L30 127L10 100C16 90 22 80 12 68Z" fill="url(#riv)"/><path d="M95 92L152 100V135C130 122 110 106 95 92Z" fill="#54688a" opacity="0.55"/><path d="M-10 103L10 100L30 127L59 146L95 163L124 175H-10Z" fill="#ab5f3d"/><path d="M-10 150L20 155L45 170L50 175H-10Z" fill="#cfb797" opacity="0.7"/><path d="M-10 100L8 103L14 115L-10 118Z" fill="#cdb898"/></g></svg>
<svg class="a" style="left:402px;top:598px;" width="82" height="76" viewBox="0 0 82 76"><rect x="0.5" y="0.5" width="80" height="90" fill="#fff" stroke="#cfcfcf" stroke-width="1"/><path d="M15 4.0H80" stroke="#bdbdbd" stroke-width="0.8"/><path d="M15 20.9H80" stroke="#bdbdbd" stroke-width="0.8"/><path d="M15 37.8H80" stroke="#bdbdbd" stroke-width="0.8"/><path d="M15 54.7H80" stroke="#bdbdbd" stroke-width="0.8"/><path d="M15 71.6H80" stroke="#bdbdbd" stroke-width="0.8"/><path d="M18 3V72M80 3V72" stroke="#d4d4d4" stroke-width="0.8"/><rect x="29" y="8.5" width="12.5" height="63" fill="#fdb900"/><rect x="60" y="29" width="12" height="42.5" fill="#fdb900"/><path d="M44.5 71.5V75" stroke="#999" stroke-width="0.8"/></svg>
<svg class="a" style="left:685px;top:531px;" width="10" height="13" viewBox="0 0 10 13"><path d="M1.5 1V10.5L3.8 8.3L5.5 11.8L7 11.1L5.4 7.7H8.6Z" fill="#fff" stroke="#333" stroke-width="0.9" stroke-linejoin="round"/></svg>

<!-- taskbar -->
<div class="task"></div>
<div class="tbtn" style="left:123px;width:49px;"></div>
<div class="tbtn" style="left:174px;width:49px;"></div>
<div class="tbtn" style="left:225px;width:46px;border-color:rgba(230,230,230,0.75);background:rgba(255,255,255,0.24);"></div>
<svg class="a" style="left:8px;top:691px;" width="24" height="24" viewBox="0 0 24 24"><path d="M1 3.6L10.3 2.3V11.3H1Z" fill="#fff"/><path d="M11.4 2.1L23 0.5V11.3H11.4Z" fill="#fff"/><path d="M1 12.4H10.3V21.5L1 20.3Z" fill="#fff"/><path d="M11.4 12.4H23V23.3L11.4 21.7Z" fill="#fff"/></svg>
<svg class="a" style="left:51px;top:694px;" width="18" height="18" viewBox="0 0 18 18"><circle cx="11" cy="7" r="5" fill="none" stroke="#e8e8e8" stroke-width="1.3"/><path d="M7.3 10.7L2.5 15.5" stroke="#e8e8e8" stroke-width="1.4"/></svg>
<svg class="a" style="left:92px;top:695px;" width="16" height="16" viewBox="0 0 16 16"><rect x="1.5" y="3" width="9" height="9" fill="none" stroke="#e8e8e8" stroke-width="1.1"/><path d="M1.5 1V14.5M10.5 1V14.5M14 1V14.5" stroke="#e8e8e8" stroke-width="1.1"/><rect x="13" y="6" width="2" height="2" fill="#e8e8e8"/></svg>
<svg class="a" style="left:133.5px;top:690px;" width="28" height="28" viewBox="0 0 28 28"><defs><linearGradient id="eg1" x1="0" y1="0" x2="0.3" y2="1"><stop offset="0" stop-color="#36b0ea"/><stop offset="0.5" stop-color="#1d84d6"/><stop offset="1" stop-color="#0f4fa6"/></linearGradient><linearGradient id="eg2" x1="0" y1="0" x2="1" y2="0.6"><stop offset="0" stop-color="#2fb8d8"/><stop offset="0.6" stop-color="#3fc8a0"/><stop offset="1" stop-color="#6ad64c"/></linearGradient></defs><circle cx="13.5" cy="14" r="13" fill="url(#eg1)"/><path d="M1.2 12C2.5 5 8 1 14.5 1C21.5 1 27 6.5 27 12.5C27 17 23.5 20.5 19.5 20.5C16.5 20.5 14.5 18.5 14.5 16C14.5 13 12 10.5 8 10.5C5 10.5 2.5 11.5 1.2 13.5Z" fill="url(#eg2)"/><path d="M14.5 16C14.5 18.5 16.5 20.5 19.5 20.5C18 22.5 14 24 10.5 22.5C8 21 7.5 18 9 16C10.5 14 14.5 13.5 14.5 16Z" fill="#1458ae"/><ellipse cx="16.5" cy="15" rx="2.2" ry="2.6" fill="#3b4a58"/></svg>
<svg class="a" style="left:185px;top:690px;" width="27" height="27" viewBox="0 0 27 27"><circle cx="13.5" cy="13.5" r="12.5" fill="#2aa3df"/><path d="M6 13L20 7.5L17.5 20L13 16.5L11 18.5L10.5 14.5Z" fill="#fff"/><path d="M10.5 14.5L17.5 9.5L12.5 15.5Z" fill="#c8daea"/></svg>
<div class="a" style="left:199px;top:707px;width:13px;height:10px;background:#e53a2f;border-radius:2px;"></div>
<div class="tl" style="left:200.5px;top:708.5px;font-family:'Liberation Sans',sans-serif;font-size:7.5px;font-weight:700;color:#fff;">44</div>
<div class="a" style="left:234px;top:690px;width:27px;height:26.5px;background:#1f63f2;border-radius:11px;"></div>
<div class="tl" style="left:237.5px;top:698.5px;font-family:'Liberation Sans',sans-serif;font-size:8.5px;color:#f4f7ff;letter-spacing:-0.4px;transform:scaleX(0.95);">zoom</div>
<svg class="a" style="left:1081px;top:695px;" width="16" height="16" viewBox="0 0 16 16"><circle cx="11" cy="4" r="2.5" fill="none" stroke="#e8e8e8" stroke-width="1.2"/><path d="M7 11C7 8 8.5 7 11 7C13.5 7 15 8 15 11" fill="none" stroke="#e8e8e8" stroke-width="1.2"/><circle cx="5" cy="9" r="2.5" fill="none" stroke="#e8e8e8" stroke-width="1.2"/><path d="M1 15.5C1 12.5 2.5 11.5 5 11.5C7.5 11.5 9 12.5 9 15.5" fill="none" stroke="#e8e8e8" stroke-width="1.2"/></svg>
<svg class="a" style="left:1114px;top:701px;" width="8" height="5" viewBox="0 0 8 5"><path d="M0.5 4.5H7.5L4 0.5Z" fill="#f0f0f0"/></svg>
<svg class="a" style="left:1131px;top:697px;" width="14" height="12" viewBox="0 0 14 12"><path d="M1 4H3.5L6.5 1V11L3.5 8H1Z" fill="none" stroke="#e8e8e8" stroke-width="1"/><path d="M8.5 4.5C9.3 5.3 9.3 6.7 8.5 7.5M10.5 2.5C12.3 4.3 12.3 7.7 10.5 9.5" fill="none" stroke="#e8e8e8" stroke-width="1"/></svg>
<svg class="a" style="left:1245px;top:695px;" width="14" height="15" viewBox="0 0 14 15"><path d="M1 1H13V11H8L7 12.5L6 11H1Z" fill="none" stroke="#eaeaea" stroke-width="1.1"/></svg>
<div class="a" style="left:1276px;top:688px;width:1px;height:32px;background:#6a6e72;"></div>

<div class="tl" style="left:260.50px;top:100.89px;font-family:'Liberation Sans', sans-serif;font-size:11.00px;font-weight:400;color:#f2f2f2;transform:scaleX(0.9365);">Ірина Закутинська</div>
<div class="tl" style="left:393.50px;top:100.89px;font-family:'Liberation Sans', sans-serif;font-size:11.00px;font-weight:400;color:#f2f2f2;transform:scaleX(0.9263);">Дяк Анастасія</div>
<div class="tl" style="left:512.00px;top:100.89px;font-family:'Liberation Sans', sans-serif;font-size:11.00px;font-weight:400;color:#f2f2f2;transform:scaleX(0.9353);">Anna Kudlyak</div>
<div class="tl" style="left:661.00px;top:100.89px;font-family:'Liberation Sans', sans-serif;font-size:11.00px;font-weight:400;color:#f2f2f2;transform:scaleX(0.8844);">Taras Julia</div>
<div class="tl" style="left:779.50px;top:100.89px;font-family:'Liberation Sans', sans-serif;font-size:11.00px;font-weight:400;color:#f2f2f2;transform:scaleX(0.9123);">Roman Slyvka</div>
<div class="tl" style="left:927.50px;top:100.89px;font-family:'Liberation Sans', sans-serif;font-size:11.00px;font-weight:400;color:#f2f2f2;transform:scaleX(0.9051);">Батюк Софія Володим...</div>
<div class="tl" style="left:411.50px;top:122.07px;font-family:'Liberation Sans', sans-serif;font-size:7.00px;font-weight:400;color:#ffe8e8;transform:scaleX(1.0077);">Постер [Режим ограниченной функциональности] -  Word (Сбой активации продукта)</div>
<div class="tl" style="left:752.00px;top:122.50px;font-family:'Liberation Sans', sans-serif;font-size:6.50px;font-weight:400;color:#c0804a;transform:scaleX(0.9364);">РАБОТА С НАДПИСЯМИ</div>
<div class="tl" style="left:277.50px;top:135.29px;font-family:'Liberation Sans', sans-serif;font-size:8.40px;font-weight:400;color:#ffffff;transform:scaleX(0.8156);">ФАЙЛ</div>
<div class="tl" style="left:314.00px;top:135.32px;font-family:'Liberation Sans', sans-serif;font-size:8.60px;font-weight:400;color:#3e3e3e;transform:scaleX(0.7762);">ГЛАВНАЯ</div>
<div class="tl" style="left:361.50px;top:135.32px;font-family:'Liberation Sans', sans-serif;font-size:8.60px;font-weight:400;color:#3e3e3e;transform:scaleX(0.7705);">ВСТАВКА</div>
<div class="tl" style="left:407.90px;top:135.32px;font-family:'Liberation Sans', sans-serif;font-size:8.60px;font-weight:400;color:#3e3e3e;transform:scaleX(0.8326);">ДИЗАЙН</div>
<div class="tl" style="left:453.60px;top:135.32px;font-family:'Liberation Sans', sans-serif;font-size:8.60px;font-weight:400;color:#3e3e3e;transform:scaleX(0.7914);">РАЗМЕТКА СТРАНИЦЫ</div>
<div class="tl" style="left:545.60px;top:135.32px;font-family:'Liberation Sans', sans-serif;font-size:8.60px;font-weight:400;color:#3e3e3e;transform:scaleX(0.7735);">ССЫЛКИ</div>
<div class="tl" style="left:590.50px;top:135.32px;font-family:'Liberation Sans', sans-serif;font-size:8.60px;font-weight:400;color:#3e3e3e;transform:scaleX(0.7929);">РАССЫЛКИ</div>
<div class="tl" style="left:644.60px;top:135.32px;font-family:'Liberation Sans', sans-serif;font-size:8.60px;font-weight:400;color:#3e3e3e;transform:scaleX(0.7525);">РЕЦЕНЗИРОВАНИЕ</div>
<div class="tl" style="left:723.50px;top:135.32px;font-family:'Liberation Sans', sans-serif;font-size:8.60px;font-weight:400;color:#3e3e3e;transform:scaleX(0.8289);">ВИД</div>
<div class="tl" style="left:772.60px;top:135.32px;font-family:'Liberation Sans', sans-serif;font-size:8.60px;font-weight:400;color:#3e3e3e;transform:scaleX(0.7955);">ФОРМАТ</div>
<div class="tl" style="left:977.40px;top:135.72px;font-family:'Liberation Serif', serif;font-size:7.50px;font-weight:400;color:#444;transform:scaleX(0.9288);">Вход</div>
<div class="tl" style="left:274.50px;top:677.00px;font-family:'Liberation Sans', sans-serif;font-size:6.50px;font-weight:400;color:#e8eef8;transform:scaleX(0.9211);">СТРАНИЦА 1 ИЗ 1</div>
<div class="tl" style="left:338.00px;top:677.00px;font-family:'Liberation Sans', sans-serif;font-size:6.50px;font-weight:400;color:#e8eef8;transform:scaleX(0.9265);">ЧИСЛО СЛОВ: 301</div>
<div class="tl" style="left:422.00px;top:677.00px;font-family:'Liberation Sans', sans-serif;font-size:6.50px;font-weight:400;color:#e8eef8;transform:scaleX(0.9229);">УКРАИНСКИЙ</div>
<div class="tl" style="left:992.00px;top:677.00px;font-family:'Liberation Sans', sans-serif;font-size:6.50px;font-weight:400;color:#e8eef8;transform:scaleX(0.9988);">90%</div>
<div class="tl" style="left:1154.50px;top:699.11px;font-family:'Liberation Sans', sans-serif;font-size:10.50px;font-weight:400;color:#f0f0f0;transform:scaleX(0.9092);">УКР</div>
<div class="tl" style="left:1196.00px;top:690.61px;font-family:'Liberation Sans', sans-serif;font-size:10.50px;font-weight:400;color:#f0f0f0;transform:scaleX(0.8561);">12:09</div>
<div class="tl" style="left:1184.00px;top:706.61px;font-family:'Liberation Sans', sans-serif;font-size:10.50px;font-weight:400;color:#f0f0f0;transform:scaleX(0.8980);">23.11.2024</div>
<div class="tl" style="left:532.50px;top:208.02px;font-family:'Liberation Sans', sans-serif;font-size:18.40px;font-weight:700;color:#111;transform:scaleX(0.8923);">ГІДРОЛОГІЧНА ХАРАКТЕРИСТИКА</div>
<div class="tl" style="left:532.50px;top:234.82px;font-family:'Liberation Sans', sans-serif;font-size:18.40px;font-weight:700;color:#111;transform:scaleX(0.8929);">СУЧАСНОЇ РІКИ ЛУКВА</div>
<div class="tl" style="left:533.50px;top:275.01px;font-family:'Liberation Sans', sans-serif;font-size:11.80px;font-weight:400;color:#1e1e1e;transform:scaleX(1.0627);">Сміх Соломія Ігорівна, учениця 7-Б класу Галицького ліцею</div>
<div class="tl" style="left:533.50px;top:293.81px;font-family:'Liberation Sans', sans-serif;font-size:11.80px;font-weight:400;color:#1e1e1e;transform:scaleX(1.0644);">імені Ярослава Осмомисла, Галицької міської ради</div>
<div class="tl" style="left:533.50px;top:321.11px;font-family:'Liberation Sans', sans-serif;font-size:11.80px;font-weight:400;color:#1e1e1e;transform:scaleX(1.0825);">Науковий керівник: Кудляк Ганна Іванівна, вчителька</div>
<div class="tl" style="left:533.50px;top:339.51px;font-family:'Liberation Sans', sans-serif;font-size:11.80px;font-weight:400;color:#1e1e1e;transform:scaleX(1.0622);">географії Галицького ліцею імені Ярослава Осмомисла</div>
<div class="tl" style="left:406.60px;top:362.03px;font-family:'Liberation Sans', sans-serif;font-size:16.50px;font-weight:400;color:#1a1a1a;transform:scaleX(0.9934);">МЕТА</div>
<div class="tl" style="left:406.00px;top:387.51px;font-family:'Liberation Sans', sans-serif;font-size:9.20px;font-weight:400;color:#262626;width:319.88px;text-align:justify;text-align-last:justify;transform:scaleX(0.9926);">Полягає в дослідженні водного режиму річки Луква під впливом природних</div>
<div class="tl" style="left:406.00px;top:400.51px;font-family:'Liberation Sans', sans-serif;font-size:9.20px;font-weight:400;color:#262626;width:317.50px;text-align:justify;text-align-last:justify;">та антропогенних чинників, основним серед яких є надмірна кількість</div>
<div class="tl" style="left:406.00px;top:413.71px;font-family:'Liberation Sans', sans-serif;font-size:9.20px;font-weight:400;color:#262626;transform:scaleX(0.9413);">атмосферних опадів.</div>
<div class="tl" style="left:406.30px;top:442.03px;font-family:'Liberation Sans', sans-serif;font-size:16.50px;font-weight:400;color:#1a1a1a;transform:scaleX(0.9943);">АКТУАЛЬНІСТЬ ДОСЛІДЖЕННЯ</div>
<div class="tl" style="left:406.00px;top:467.11px;font-family:'Liberation Sans', sans-serif;font-size:9.20px;font-weight:400;color:#262626;width:317.50px;text-align:justify;text-align-last:justify;">Актуальність дослідження річки Луква зумовлена посиленим</div>
<div class="tl" style="left:406.00px;top:478.11px;font-family:'Liberation Sans', sans-serif;font-size:9.20px;font-weight:400;color:#262626;width:317.50px;text-align:justify;text-align-last:justify;">антропогенним впливом, слабкою вивченістю закономірностей</div>
<div class="tl" style="left:406.00px;top:489.91px;font-family:'Liberation Sans', sans-serif;font-size:9.20px;font-weight:400;color:#262626;width:318.48px;text-align:justify;text-align-last:justify;transform:scaleX(0.9969);">функціонування водойм і необхідністю їх пізнання для вирішення завдань,</div>
<div class="tl" style="left:406.00px;top:501.51px;font-family:'Liberation Sans', sans-serif;font-size:9.20px;font-weight:400;color:#262626;transform:scaleX(0.9679);">які мають важливе значення.</div>
<div class="tl" style="left:406.30px;top:522.75px;font-family:'Liberation Serif', serif;font-size:20.00px;font-weight:400;color:#111;transform:scaleX(0.9639);">КЛІМАТ</div>
<div class="tl" style="left:406.00px;top:546.99px;font-family:'Liberation Serif', serif;font-size:9.80px;font-weight:400;color:#262626;width:231.50px;text-align:justify;text-align-last:justify;">Найбільша річна кількість опадів спостерігається у</div>
<div class="tl" style="left:406.00px;top:559.69px;font-family:'Liberation Serif', serif;font-size:9.80px;font-weight:400;color:#262626;width:234.06px;text-align:justify;text-align-last:justify;transform:scaleX(0.9891);">Скибових Ґорганах – 900-1400 мм. Найменша на пн.-зх.</div>
<div class="tl" style="left:406.00px;top:572.29px;font-family:'Liberation Serif', serif;font-size:9.80px;font-weight:400;color:#262626;transform:scaleX(0.9807);">околиці м. Галича – 600-800 мм.</div>
<div class="tl" style="left:755.50px;top:546.04px;font-family:'Liberation Sans', sans-serif;font-size:9.40px;font-weight:400;color:#222;transform:scaleX(1.0824);">Р. Луква біля с. Комарів</div>
<div class="tl" style="left:508.30px;top:592.49px;font-family:'Liberation Serif', serif;font-size:19.60px;font-weight:400;color:#111;transform:scaleX(0.9853);">Характеристика, спостереження за режимом</div>
<div class="tl" style="left:508.30px;top:616.59px;font-family:'Liberation Serif', serif;font-size:9.80px;font-weight:400;color:#262626;width:374.00px;text-align:justify;text-align-last:justify;">Річка Луква протікає в Україні у межах сучасних Івано-Франківського і Калуського</div>
<div class="tl" style="left:508.30px;top:629.19px;font-family:'Liberation Serif', serif;font-size:9.80px;font-weight:400;color:#262626;width:375.09px;text-align:justify;text-align-last:justify;transform:scaleX(0.9971);">районів Івано-Франківської області. Бере початок на південь від с. Луквиця, на схилі гори</div>
<div class="tl" style="left:508.30px;top:641.79px;font-family:'Liberation Serif', serif;font-size:9.80px;font-weight:400;color:#262626;width:374.00px;text-align:justify;text-align-last:justify;">Прислоп, що знаходиться у зовнішньому пасмі хребтів Скибових Ґорган, на висоті 710м</div>
<div class="tl" style="left:508.30px;top:654.39px;font-family:'Liberation Serif', serif;font-size:9.80px;font-weight:400;color:#262626;width:374.00px;text-align:justify;text-align-last:justify;">над рівнем моря. Тече у пн.-сх. напрямку Прилуквинською височиною. Впадає у Дністер</div>
<div class="tl" style="left:508.30px;top:666.99px;font-family:'Liberation Serif', serif;font-size:9.80px;font-weight:400;color:#262626;width:374.00px;text-align:justify;text-align-last:justify;">на пн.-сх. околиці м. Галич. Довжина – 72 км. Річка характеризується нерівномірним</div>
<div class="tl" style="left:403.00px;top:600.34px;font-family:'Liberation Sans', sans-serif;font-size:5.50px;font-weight:400;color:#3a3a3a;transform:scaleX(1.1348);">80%</div>
<div class="tl" style="left:403.00px;top:617.24px;font-family:'Liberation Sans', sans-serif;font-size:5.50px;font-weight:400;color:#3a3a3a;transform:scaleX(1.1348);">60%</div>
<div class="tl" style="left:403.00px;top:634.14px;font-family:'Liberation Sans', sans-serif;font-size:5.50px;font-weight:400;color:#3a3a3a;transform:scaleX(1.1348);">40%</div>
<div class="tl" style="left:403.00px;top:651.04px;font-family:'Liberation Sans', sans-serif;font-size:5.50px;font-weight:400;color:#3a3a3a;transform:scaleX(1.1348);">20%</div>
<div class="tl" style="left:406.00px;top:667.94px;font-family:'Liberation Sans', sans-serif;font-size:5.50px;font-weight:400;color:#3a3a3a;transform:scaleX(1.1945);">0%</div>
</body></html>
